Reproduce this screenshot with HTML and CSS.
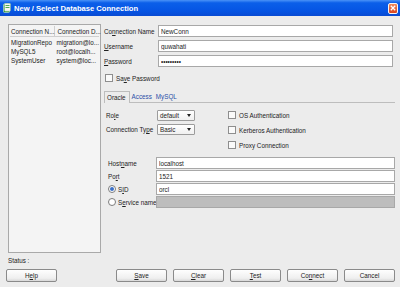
FILE: index.html
```html
<!DOCTYPE html>
<html lang="en">
<head>
    <meta charset="UTF-8">
    <title>New / Select Database Connection</title>
    <link rel="stylesheet" href="styles.css">
</head>
<body>
    <div class="titlebar">
        <svg class="app-icon" width="8" height="10" viewBox="0 0 8 10">
            <rect x="0.5" y="1" width="6" height="8.5" rx="1" fill="#2f9d3a" stroke="#d8f0d8" stroke-width="0.6"/>
            <rect x="1.5" y="0.3" width="6" height="8" rx="1" fill="#f4f4f4" stroke="#7fb87f" stroke-width="0.5"/>
            <rect x="2.5" y="2" width="4" height="1" fill="#4caf50"/>
            <rect x="2.5" y="4" width="4" height="1" fill="#4caf50"/>
        </svg>
        <span class="title">New / Select Database Connection</span>
        <span class="close">
            <svg width="6" height="6" viewBox="0 0 6 6">
                <path d="M0.8 0.8 L5.2 5.2 M5.2 0.8 L0.8 5.2" stroke="#fff" stroke-width="1.3"/>
            </svg>
        </span>
    </div>

    <div class="content">
        <div class="conn-list">
            <div class="list-row list-head">
                <span class="col">Connection N...</span>
                <span class="col">Connection D...</span>
            </div>
            <div class="list-row">
                <span class="col">MigrationRepo</span>
                <span class="col">migration@lo...</span>
            </div>
            <div class="list-row">
                <span class="col">MySQL5</span>
                <span class="col">root@localh...</span>
            </div>
            <div class="list-row">
                <span class="col">SystemUser</span>
                <span class="col">system@loc...</span>
            </div>
        </div>

        <div class="form">
            <div class="field top">
                <label>Co<u>n</u>nection Name</label>
                <input type="text" value="NewConn" readonly>
            </div>
            <div class="field top">
                <label><u>U</u>sername</label>
                <input type="text" value="guwahati" readonly>
            </div>
            <div class="field top">
                <label><u>P</u>assword</label>
                <input type="password" value="secret123" readonly>
            </div>

            <div class="check save-pw">
                <span class="box"></span>
                <span>Sa<u>v</u>e Password</span>
            </div>

            <div class="tabs">
                <span class="tab active">Oracle</span>
                <span class="tab">Access</span>
                <span class="tab">MySQL</span>
            </div>

            <div class="tab-body">
                <div class="options">
                    <div class="opt-left">
                        <div class="sel-row">
                            <label>Ro<u>l</u>e</label>
                            <span class="select">default<span class="arrow"></span></span>
                        </div>
                        <div class="sel-row second">
                            <label>Connection Ty<u>p</u>e</label>
                            <span class="select">Basic<span class="arrow"></span></span>
                        </div>
                    </div>
                    <div class="opt-right">
                        <div class="check"><span class="box"></span><span>OS Authentication</span></div>
                        <div class="check"><span class="box"></span><span>Kerberos Authentication</span></div>
                        <div class="check"><span class="box"></span><span>Proxy Connection</span></div>
                    </div>
                </div>

                <div class="field low">
                    <label>Host<u>n</u>ame</label>
                    <input type="text" value="localhost" readonly>
                </div>
                <div class="field low">
                    <label>Po<u>r</u>t</label>
                    <input type="text" value="1521" readonly>
                </div>
                <div class="field low">
                    <label><span class="radio on"></span>S<u>I</u>D</label>
                    <input type="text" value="orcl" readonly>
                </div>
                <div class="field low">
                    <label><span class="radio"></span>S<u>e</u>rvice name</label>
                    <input type="text" class="disabled" value="" readonly>
                </div>
            </div>
        </div>
    </div>

    <div class="status">Status :</div>

    <div class="buttons">
        <span class="btn help">H<u>e</u>lp</span>
        <span class="btn save"><u>S</u>ave</span>
        <span class="btn"><u>C</u>lear</span>
        <span class="btn"><u>T</u>est</span>
        <span class="btn">Co<u>n</u>nect</span>
        <span class="btn">Cancel</span>
    </div>
</body>
</html>
```

FILE: styles.css
```css
* {
    box-sizing: border-box;
}
body {
    margin: 0;
    width: 400px;
    height: 287px;
    overflow: hidden;
    background: #ececec;
    font-family: 'Liberation Sans', Arial, sans-serif;
    font-size: 6.3px;
    color: #222;
}
u {
    text-decoration-thickness: 0.5px;
    text-underline-offset: 1px;
}

/* title bar */
.titlebar {
    height: 16px;
    display: flex;
    align-items: center;
    padding: 0 2px 0 3px;
    background: linear-gradient(#4a92f7 0%, #0b5fe9 18%, #0654e3 70%, #0a4bd2 100%);
    color: white;
    font-weight: bold;
    font-size: 7.6px;
}
.app-icon {
    margin-right: 3px;
}
.title {
    flex: 1;
}
.close {
    width: 10px;
    height: 11px;
    display: flex;
    align-items: center;
    justify-content: center;
    background: linear-gradient(#f08a5d, #d9431e);
    border: 1px solid #f5f5f5;
    border-radius: 2px;
}

/* main area */
.content {
    display: flex;
    padding: 8px 5px 0 8px;
}
.conn-list {
    width: 93px;
    height: 229px;
    border: 1px solid #a9a9a9;
    background: #f4f4f4;
    padding: 1px;
}
.list-row {
    display: flex;
    height: 9px;
    line-height: 9px;
}
.list-head {
    height: 11px;
    line-height: 11px;
    border-bottom: 1px solid #cfcfcf;
    margin-bottom: 1px;
}
.col {
    width: 46px;
    padding-left: 1px;
    white-space: nowrap;
}
.list-head .col:first-child {
    border-right: 1px solid #cfcfcf;
}
.col + .col {
    padding-left: 2px;
}

.form {
    flex: 1;
    margin-left: 3px;
    padding-top: 1px;
}
.field {
    display: flex;
    align-items: center;
    height: 12px;
    margin-bottom: 3px;
}
.field label {
    width: 54px;
    flex-shrink: 0;
    display: flex;
    align-items: center;
    white-space: nowrap;
}
.field input {
    flex: 1;
    min-width: 0;
    height: 12px;
    margin: 0;
    padding: 0 2px;
    border: 1px solid #a8a8a8;
    background: white;
    font: inherit;
    color: #222;
    outline: none;
}
.field.top {
    margin-right: 2px;
}
.field input.disabled {
    background: #bdbdbd;
}

.check {
    display: flex;
    align-items: center;
    height: 8px;
}
.box {
    width: 8px;
    height: 8px;
    flex-shrink: 0;
    border: 1px solid #8e8e8e;
    background: #fafafa;
    margin-right: 3px;
}
.save-pw {
    margin-top: 7px;
    margin-left: 1px;
}

/* tabs */
.tabs {
    display: flex;
    align-items: flex-end;
    height: 12px;
    margin-top: 9px;
    border-bottom: 1px solid #bdbdbd;
}
.tab {
    padding: 0 2px;
    height: 10px;
    line-height: 10px;
    color: #2b4fa8;
}
.tab.active {
    height: 12px;
    line-height: 12px;
    padding: 0 3px 0 2px;
    color: #222;
    border: 1px solid #bdbdbd;
    border-bottom: none;
    background: #ececec;
    margin-bottom: -1px;
}

.tab-body {
    padding-left: 2px;
}
.options {
    display: flex;
}
.opt-left {
    width: 122px;
    padding-top: 7px;
}
.sel-row {
    display: flex;
    align-items: center;
    height: 11px;
}
.sel-row.second {
    margin-top: 3px;
}
.sel-row label {
    width: 51px;
    white-space: nowrap;
}
.select {
    position: relative;
    width: 38px;
    height: 11px;
    line-height: 9px;
    padding-left: 2px;
    border: 1px solid #9c9c9c;
    border-radius: 1px;
    background: linear-gradient(#ffffff, #f0f0f0);
}
.arrow {
    position: absolute;
    right: 3px;
    top: 3px;
    border-left: 2.5px solid transparent;
    border-right: 2.5px solid transparent;
    border-top: 3px solid #222;
}
.opt-right {
    padding-top: 8px;
}
.opt-right .check {
    margin-bottom: 7px;
}

.field.low {
    margin-bottom: 1px;
}
.options + .field {
    margin-top: 1px;
}
.field.low label {
    width: 50px;
    padding-left: 2px;
}
.radio {
    width: 8px;
    height: 8px;
    flex-shrink: 0;
    border: 1px solid #7c7c7c;
    border-radius: 50%;
    background: white;
    margin-right: 2px;
    display: flex;
    align-items: center;
    justify-content: center;
}
.radio.on::after {
    content: "";
    width: 4px;
    height: 4px;
    border-radius: 50%;
    background: #3a70c8;
}

/* bottom */
.status {
    height: 7px;
    line-height: 7px;
    margin-top: 4px;
    padding-left: 8px;
}
.buttons {
    display: flex;
    gap: 6px;
    margin-top: 5px;
    padding-left: 6px;
}
.btn {
    width: 51px;
    height: 13px;
    line-height: 11px;
    text-align: center;
    border: 1px solid #8a8a8a;
    border-radius: 2px;
    background: linear-gradient(#fefefe, #efefef 75%, #d8d8d8);
}
.btn.save {
    margin-left: 53px;
}
```
